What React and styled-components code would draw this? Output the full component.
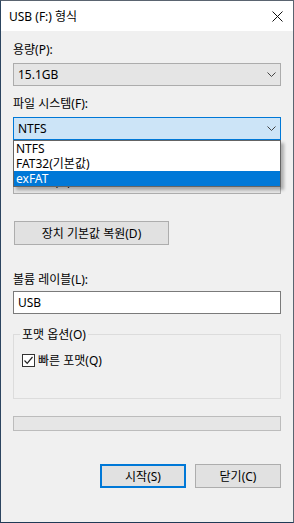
import React from "react";
import styled, { createGlobalStyle } from "styled-components";

const GlobalStyle = createGlobalStyle`
  html, body {
    margin: 0;
    padding: 0;
    background: #f0f0f0;
  }
  * {
    box-sizing: border-box;
  }
`;

const Window = styled.div`
  width: 294px;
  height: 523px;
  display: flex;
  flex-direction: column;
  background: #f0f0f0;
  border: 1px solid #5a6470;
  border-bottom-color: #1f3a56;
  border-left-color: #2c4560;
  font-family: "Noto Sans", "Noto Sans CJK KR", sans-serif;
  font-size: 12px;
  color: #000;
`;

const TitleBar = styled.div`
  height: 30px;
  flex: none;
  background: #fff;
  display: flex;
  align-items: center;
  justify-content: space-between;
  padding: 0 10px 0 8px;
`;

const Title = styled.span`
  line-height: 16px;
  padding-top: 1px;
`;

const Body = styled.div`
  display: flex;
  flex-direction: column;
  padding: 11px 12px 0;
`;

const Label = styled.div`
  height: 15px;
  line-height: 15px;
  margin-top: ${(p) => p.$top || 0}px;
  white-space: nowrap;
  visibility: ${(p) => (p.$covered ? "hidden" : "visible")};
`;

const Combo = styled.div`
  position: relative;
  height: 23px;
  margin-top: ${(p) => p.$top || 0}px;
  display: flex;
  align-items: center;
  justify-content: space-between;
  padding: 0 4px;
  background: ${(p) => (p.$focused ? "#cce4f7" : "#e5e5e5")};
  border: 1px solid ${(p) => (p.$focused ? "#0078d7" : "#acacac")};
  line-height: 15px;
`;

const DropList = styled.div`
  position: absolute;
  top: 22px;
  left: -1px;
  right: -1px;
  background: #fff;
  border: 1px solid #646464;
  box-shadow: 3px 3px 3px rgba(0, 0, 0, 0.28);
  z-index: 5;
`;

const Option = styled.div`
  height: 15px;
  line-height: 15px;
  padding-left: 2px;
  background: ${(p) => (p.$selected ? "#0078d7" : "transparent")};
  color: ${(p) => (p.$selected ? "#fff" : "#000")};
`;

const Button = styled.button`
  height: 24px;
  width: ${(p) => p.$width}px;
  margin: 0;
  padding: 0;
  font: inherit;
  color: #000;
  background: #e1e1e1;
  border: ${(p) => (p.$default ? "2px solid #0078d7" : "1px solid #adadad")};
  line-height: 15px;
`;

const RestoreButton = styled(Button)`
  margin-top: 27px;
  margin-left: 1px;
`;

const TextInput = styled.div`
  height: 23px;
  margin-top: 4px;
  background: #fff;
  border: 1px solid #7a7a7a;
  padding: 0 4px;
  display: flex;
  align-items: center;
  line-height: 15px;
`;

const Group = styled.fieldset`
  margin: 13px 0 0;
  padding: 0 0 31px;
  min-width: 0;
  border: 1px solid #dcdcdc;
`;

const Legend = styled.legend`
  margin-left: 6px;
  padding: 0 2px;
  height: 15px;
  line-height: 15px;
`;

const CheckRow = styled.label`
  display: flex;
  align-items: center;
  gap: 3px;
  margin: 12px 0 0 8px;
  height: 13px;
  line-height: 15px;
`;

const CheckBox = styled.span`
  width: 13px;
  height: 13px;
  flex: none;
  background: #fff;
  border: 1px solid #333;
  display: flex;
  align-items: center;
  justify-content: center;
`;

const Progress = styled.div`
  height: 15px;
  margin-top: 17px;
  background: #e6e6e6;
  border: 1px solid #bcbcbc;
`;

const ButtonRow = styled.div`
  display: flex;
  justify-content: flex-end;
  gap: 9px;
  margin-top: 33px;
`;

const Chevron = () => (
  <svg width="9" height="5" viewBox="0 0 9 5">
    <path d="M0.5 0.5 L4.5 4.5 L8.5 0.5" fill="none" stroke="#444" strokeWidth="1" />
  </svg>
);

const CloseIcon = () => (
  <svg width="11" height="11" viewBox="0 0 11 11">
    <path d="M0.5 0.5 L10.5 10.5 M10.5 0.5 L0.5 10.5" stroke="#111" strokeWidth="1" />
  </svg>
);

const CheckMark = () => (
  <svg width="11" height="11" viewBox="0 0 11 11">
    <path d="M1.5 5.5 L4.2 8.3 L9.5 2" fill="none" stroke="#222" strokeWidth="1.2" />
  </svg>
);

export default function App() {
  return (
    <>
      <GlobalStyle />
      <Window>
        <TitleBar>
          <Title>USB (F:) 형식</Title>
          <CloseIcon />
        </TitleBar>
        <Body>
          <Label>용량(P):</Label>
          <Combo $top={6}>
            <span>15.1GB</span>
            <Chevron />
          </Combo>

          <Label $top={10}>파일 시스템(F):</Label>
          <Combo $top={6} $focused>
            <span>NTFS</span>
            <Chevron />
            <DropList>
              <Option>NTFS</Option>
              <Option>FAT32(기본값)</Option>
              <Option $selected>exFAT</Option>
            </DropList>
          </Combo>

          <Label $top={10} $covered>
            할당 단위 크기(A):
          </Label>
          <Combo $top={6}>
            <span>4096 바이트</span>
            <Chevron />
          </Combo>

          <RestoreButton $width={155}>장치 기본값 복원(D)</RestoreButton>

          <Label $top={27}>볼륨 레이블(L):</Label>
          <TextInput>USB</TextInput>

          <Group>
            <Legend>포맷 옵션(O)</Legend>
            <CheckRow>
              <CheckBox>
                <CheckMark />
              </CheckBox>
              빠른 포맷(Q)
            </CheckRow>
          </Group>

          <Progress />

          <ButtonRow>
            <Button $width={86} $default>
              시작(S)
            </Button>
            <Button $width={86}>닫기(C)</Button>
          </ButtonRow>
        </Body>
      </Window>
    </>
  );
}
